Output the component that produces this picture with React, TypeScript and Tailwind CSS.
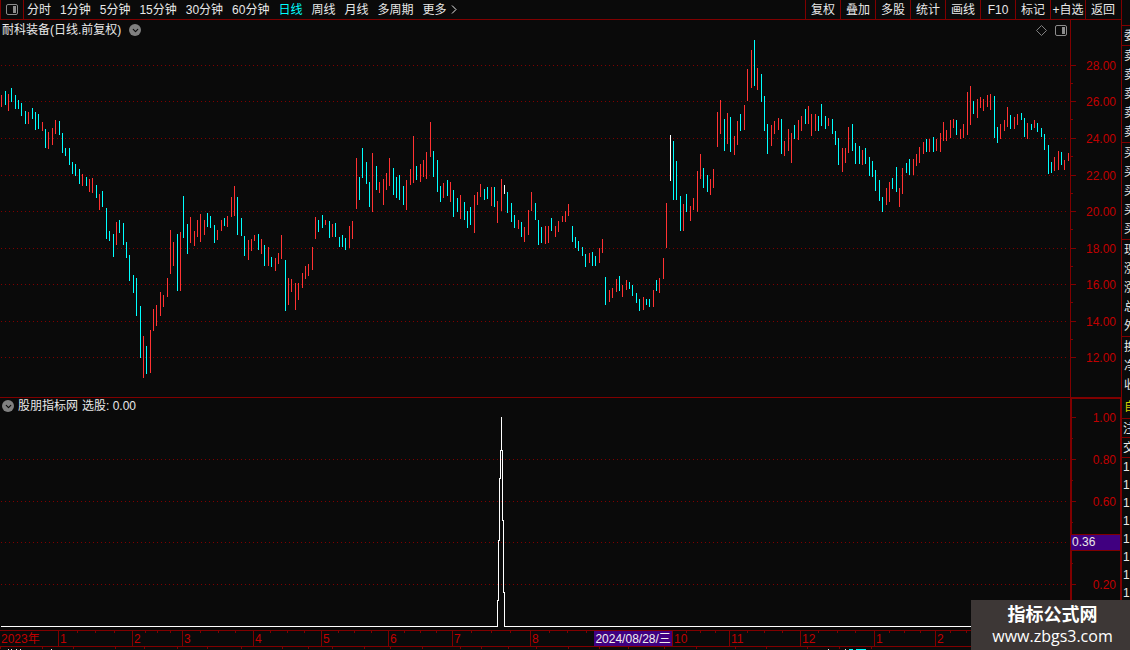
import { ChevronDown } from "lucide-react";

const periods = ["分时", "1分钟", "5分钟", "15分钟", "30分钟", "60分钟", "日线", "周线", "月线", "多周期"];
const tools = ["复权", "叠加", "多股", "统计", "画线", "F10", "标记", "+自选", "返回"];

// one entry per trading day: colour, x, high, low
const days = `
r1,95,107 c5,91,105 r8,94,111 c11,88,102 c15,95,109 c18,100,109 c21,103,116 c25,111,124 r28,112,124 c32,108,119
c35,112,130 c38,114,129 r42,122,131 c45,129,148 r48,132,149 r52,128,145 r55,120,134 c59,121,135 c62,133,153 c65,148,156
c69,148,165 c72,162,174 c75,164,176 c79,169,184 r82,174,186 c86,177,186 r89,179,192 r92,178,193 c96,185,198 r99,194,210
c102,191,207 c106,208,239 c109,231,241 c113,234,257 r116,222,245 c119,220,233 c123,223,245 c126,242,258 c129,255,281 c133,275,293
c136,278,316 c140,306,358 r143,336,378 c146,346,374 r150,330,373 r153,309,331 r156,305,326 r160,292,316 r163,295,307 r167,278,297
r170,230,274 r173,242,266 c177,234,291 r180,232,291 c183,196,238 c187,224,254 r190,217,243 r194,231,246 r197,220,237 r200,214,242
r204,220,235 c207,213,227 c210,216,228 c214,225,243 r217,230,240 r221,220,231 c224,218,226 r227,216,227 r231,197,217 r234,186,216
c237,197,235 c241,218,236 c244,236,256 r248,240,260 r251,239,251 r254,235,241 c258,234,250 r261,239,254 c264,245,266 r268,247,266
c271,257,267 r275,258,271 r278,253,264 r281,235,259 c285,260,311 r288,278,305 r291,279,292 r295,283,310 r298,283,300 r302,273,288
r305,266,279 r308,264,276 r312,247,270 r315,217,239 c318,220,232 c322,215,228 r325,220,225 c329,221,238 r332,224,237 c335,223,237
c339,237,247 c342,235,247 c345,238,250 r349,226,248 r352,221,239 r356,158,209 c359,177,200 c362,148,178 c366,162,184 c369,182,207
r372,153,212 c376,166,190 r379,182,193 r383,179,205 r386,173,190 r389,158,186 c393,168,195 c396,177,198 c399,175,200 c403,186,205
r406,180,210 r410,169,185 r413,136,183 c416,166,180 r420,164,182 r423,160,177 r426,152,179 r430,122,157 c433,151,177 c437,160,192
c440,186,202 r443,183,198 c447,180,196 r450,182,202 c453,190,217 c457,198,212 r460,195,219 c464,202,220 c467,211,228 c470,207,225
r474,195,233 r477,192,205 r480,184,197 c484,189,200 c487,187,199 r491,187,206 c494,187,207 r497,201,223 r501,179,211 w504,185,194
c507,192,213 c511,203,222 c514,215,228 r518,220,229 c521,222,237 r524,227,242 r528,210,235 r531,192,211 c535,203,220 c538,220,245
c541,227,243 r545,226,244 r548,226,243 c551,218,231 r555,226,237 r558,221,232 r562,216,222 r565,211,222 r568,204,216 c572,226,242
c575,237,248 c578,241,251 c582,247,256 c585,254,267 r589,253,263 c592,252,266 c595,256,266 r599,248,263 r602,239,253 c605,277,305
r609,290,302 r612,288,298 r616,279,292 c619,276,291 r622,285,297 r626,280,290 c629,282,289 c632,285,296 c636,293,303 c639,299,311
r643,297,310 c646,299,305 c649,299,307 r653,290,307 c656,280,291 r659,278,293 r663,258,279 r666,203,248 w670,135,181 c673,141,200
c676,161,200 c680,196,231 r683,204,231 c686,194,212 r690,206,221 r693,198,210 r697,171,212 r700,154,179 c703,168,188 c707,175,192
r710,179,195 r713,169,188 r717,112,147 r720,100,134 c724,119,151 r727,113,144 c730,117,152 r734,136,155 r737,121,145 c740,114,131
r744,105,130 r747,69,101 r751,50,88 c754,40,86 r757,68,90 c761,74,102 c764,96,131 c767,124,154 r771,125,146 r774,121,134
r778,118,130 c781,119,154 r784,141,156 r788,129,151 r791,133,163 c794,125,139 r798,120,140 r801,116,131 c805,109,124 r808,106,124
r811,114,136 r815,114,131 c818,116,131 c821,104,126 c825,116,129 r828,118,126 c832,119,134 c835,131,145 c838,138,165 r842,148,172
r845,148,163 r848,127,153 c852,124,151 c855,143,164 c859,146,164 r862,150,165 c865,148,164 c869,157,176 c872,161,177 c875,170,191
c879,180,201 c882,197,212 r886,188,205 r889,182,202 c892,178,189 c896,167,192 r899,188,207 r902,168,194 c906,163,173 c909,159,175
r913,159,175 r916,154,166 r919,147,163 r923,142,154 c926,139,152 r929,139,152 c933,137,152 r936,139,151 r940,133,152 r943,122,141
r946,130,141 r950,120,138 r953,119,128 c956,120,135 r960,129,139 r963,124,138 r967,92,135 r970,86,125 c973,101,114 r977,99,118
r980,97,108 r983,99,111 r987,95,107 r990,94,110 c994,96,138 c997,127,143 r1000,124,139 r1004,120,131 r1007,107,127 c1010,115,129
r1014,117,129 r1017,114,125 c1021,113,120 c1024,118,137 r1027,123,139 c1031,124,130 r1034,120,128 c1037,123,132 c1041,128,137 c1044,134,150
c1048,145,174 c1051,162,173 r1054,157,171 r1058,151,170 c1061,152,165 r1064,160,170 r1068,153,161
`
  .trim()
  .split(/\s+/)
  .map((day) => {
    const [x, high, low] = day.slice(1).split(",").map(Number);
    return { tone: day[0], x, high, low };
  });

const tones: Record<string, string> = { r: "#ff3232", c: "#00ffff", w: "#ffffff" };

const prices = [
  { label: "28.00", y: 65 },
  { label: "26.00", y: 101 },
  { label: "24.00", y: 138 },
  { label: "22.00", y: 175 },
  { label: "20.00", y: 211 },
  { label: "18.00", y: 248 },
  { label: "16.00", y: 284 },
  { label: "14.00", y: 321 },
  { label: "12.00", y: 357 },
];

const levels = [
  { label: "1.00", y: 417 },
  { label: "0.80", y: 459 },
  { label: "0.60", y: 501 },
  { label: "", y: 542 },
  { label: "0.20", y: 584 },
];

const months = [
  { label: "2023年", days: 58 },
  { label: "1", days: 74 },
  { label: "2", days: 50 },
  { label: "3", days: 71 },
  { label: "4", days: 68 },
  { label: "5", days: 67 },
  { label: "6", days: 64 },
  { label: "7", days: 78 },
  { label: "8", days: 75 },
  { label: "", days: 67 },
  { label: "10", days: 57 },
  { label: "11", days: 71 },
  { label: "12", days: 74 },
  { label: "1", days: 61 },
  { label: "2", days: 62 },
  { label: "", days: 124 },
];

const footerTicks = [
  0, 42, 73, 115, 144, 177, 207, 241, 282, 308, 332, 364, 390, 422, 460, 481, 508, 536, 568, 599, 628, 664, 696, 735, 766, 807, 839, 871,
];

const quoteGroups = [["卖", "卖", "卖", "卖", "卖"], ["买", "买", "买", "买", "买"], ["现", "涨", "涨", "总", "外"], ["换", "净", "收"]];

function PanelIcon() {
  return (
    <svg width="12" height="11" viewBox="0 0 12 11" aria-hidden="true">
      <rect x="0.5" y="0.5" width="11" height="10" rx="1.5" fill="none" stroke="#8c8c8c" />
      <rect x="7" y="2" width="3" height="7" fill="#8c8c8c" />
    </svg>
  );
}

function PaneMenu({ label }: { label: string }) {
  return (
    <button aria-label={label} className="flex h-3 w-3 shrink-0 items-center justify-center rounded-full bg-[#808080] text-[#0a0a0a]">
      <ChevronDown size={9} strokeWidth={3} />
    </button>
  );
}

function GridLine({ y }: { y: number }) {
  return <line x1="1" x2="1067" y1={y + 0.5} y2={y + 0.5} stroke="#800000" strokeDasharray="1 3" />;
}

function TopBar() {
  return (
    <header className="flex h-5 border-b border-[#800000]">
      <button aria-label="侧栏" className="flex w-6 shrink-0 items-center justify-center border-x border-[#800000]">
        <PanelIcon />
      </button>
      <nav className="flex flex-1 items-center gap-[9px] overflow-hidden pl-[3px] whitespace-nowrap">
        {periods.map((period) => (
          <button key={period} className={period === "日线" ? "text-[#00ffff]" : ""}>
            {period}
          </button>
        ))}
        <button className="flex items-center gap-1">
          更多
          <svg width="6" height="9" viewBox="0 0 6 9" fill="none" stroke="currentColor" aria-hidden="true">
            <path d="M1 0.5 5 4.5 1 8.5" />
          </svg>
        </button>
      </nav>
      <div className="flex pr-px">
        {tools.map((tool) => (
          <button key={tool} className="w-[35px] border-l border-[#800000] text-center whitespace-nowrap">
            {tool}
          </button>
        ))}
      </div>
    </header>
  );
}

function PricePane() {
  return (
    <section className="flex">
      <div className="min-w-0 flex-1">
        <div className="flex h-5 items-center gap-2 pr-[3px] pl-0.5">
          <h1>耐科装备(日线.前复权)</h1>
          <PaneMenu label="主图菜单" />
          <svg className="ml-auto" width="11" height="11" viewBox="0 0 11 11" fill="none" stroke="#808080" aria-hidden="true">
            <path d="M5.5 0.5 10.5 5.5 5.5 10.5 0.5 5.5Z" />
          </svg>
          <PanelIcon />
        </div>
        <svg className="block h-[357px] w-full" viewBox="0 40 1070 357" preserveAspectRatio="none" shapeRendering="crispEdges">
          {prices.map((price) => (
            <GridLine key={price.label} y={price.y} />
          ))}
          {days.map((day) => (
            <rect key={day.x} x={day.x} y={day.high} width="1" height={day.low - day.high} fill={tones[day.tone]} />
          ))}
        </svg>
      </div>
      <svg className="block shrink-0" width="51" height="377" viewBox="0 20 51 377" fill="#800000" shapeRendering="crispEdges">
        <rect x="0" y="20" width="1" height="377" />
        {prices.map((price, i) => (
          <g key={price.label}>
            <rect x="1" y={price.y} width="5" height="1" />
            {i < prices.length - 1 && <rect x="1" y={price.y + 18} width="2" height="1" />}
            <text x="46" y={price.y + 5} textAnchor="end" fill="#c00000">
              {price.label}
            </text>
          </g>
        ))}
      </svg>
    </section>
  );
}

function SignalPane() {
  return (
    <section className="flex border-t border-[#800000]">
      <div className="min-w-0 flex-1">
        <div className="flex h-4 items-center gap-1 pl-0.5">
          <PaneMenu label="副图菜单" />
          <h2>股朋指标网</h2>
          <span>选股: 0.00</span>
        </div>
        <svg className="block h-[216px] w-full" viewBox="0 414 1070 216" preserveAspectRatio="none" shapeRendering="crispEdges">
          {levels.slice(1).map((level) => (
            <GridLine key={level.y} y={level.y} />
          ))}
          <path
            d="M1 626.5H497.5V600.5H498.5V540.5H499.5V478.5H500.5V450.5H501.5V417V450.5H502.5V520.5H503.5V592.5H504.5V626.5H1070"
            fill="none"
            stroke="#ffffff"
          />
        </svg>
      </div>
      <svg className="block shrink-0" width="51" height="232" viewBox="0 398 51 232" fill="#800000" shapeRendering="crispEdges">
        <path d="M0 398H51V630H50V399H2V630H0Z" />
        {levels.map((level, i) => (
          <g key={level.y}>
            <rect x="2" y={level.y} width="4" height="1" />
            {i < levels.length - 1 && <rect x="2" y={level.y + 21} width="1" height="1" />}
            <text x="46" y={level.y + 5} textAnchor="end" fill="#c00000">
              {level.label}
            </text>
          </g>
        ))}
        <rect x="1" y="534" width="50" height="17" />
        <rect x="1" y="535" width="49" height="15" fill="#400080" />
        <text x="2" y="546" fill="#e8e8e8">
          0.36
        </text>
      </svg>
    </section>
  );
}

function Timeline() {
  return (
    <div className="relative flex h-4 overflow-hidden border-t border-[#800000] text-[#c00000]">
      {months.map((month, i) => (
        <div
          key={i}
          className={i > 0 ? "relative border-l border-[#800000] pl-px leading-4" : "pl-px leading-4"}
          style={{ width: `${(month.days / 1121) * 100}%` }}
        >
          {month.label}
          {i > 0 && (
            <div className="absolute inset-x-0 top-0 flex justify-evenly">
              <i className="h-0.5 w-px bg-[#800000]" />
              <i className="h-0.5 w-px bg-[#800000]" />
              <i className="h-0.5 w-px bg-[#800000]" />
            </div>
          )}
        </div>
      ))}
      <time className="absolute top-0 left-[53%] h-full w-[78px] bg-[#400080] text-center leading-4 whitespace-nowrap text-[#f0f0f0]">
        2024/08/28/三
      </time>
    </div>
  );
}

function QuoteStrip() {
  return (
    <aside className="w-[9px] shrink-0 overflow-hidden border-l border-[#800000] pt-[25px]">
      <div className="h-5 border-t border-[#800000] pl-0.5 leading-5">委</div>
      {quoteGroups.map((group, i) => (
        <div key={i} className="border-t border-[#800000] pb-px pl-0.5">
          {group.map((name, j) => (
            <div key={j} className="h-[19px] leading-5">
              {name}
            </div>
          ))}
        </div>
      ))}
      <div className="h-[23px] pl-0.5 leading-6 text-[#d0d000]">自</div>
      <div className="h-[19px] border-t border-[#800000] pl-px leading-5">注</div>
      <div className="h-5 border-t border-[#800000] pl-px leading-5">交</div>
      <div className="border-t border-[#800000] pl-px">
        {[0, 1, 2, 3, 4, 5, 6, 7].map((row) => (
          <div key={row} className="h-[18px] leading-[18px]">
            1
          </div>
        ))}
      </div>
    </aside>
  );
}

export default function App() {
  return (
    <div className="relative flex min-h-screen overflow-hidden bg-[#0a0a0a] font-['Liberation_Sans','Noto_Sans_CJK_SC',sans-serif] text-xs text-[#e8e8e8]">
      <main className="min-w-0 flex-1">
        <TopBar />
        <PricePane />
        <SignalPane />
        <Timeline />
        <svg className="block h-1 w-full" viewBox="0 0 1121 4" preserveAspectRatio="none" fill="#800000" shapeRendering="crispEdges">
          <rect width="1121" height="1" />
          {footerTicks.map((x) => (
            <rect key={x} x={x} y="1" width="1" height="2" />
          ))}
          <path d="M8 3h1v1h-1zM11 3h1v1h-1zM16 3h1v1h-1zM20 3h1v1h-1zM51 3h1v1h-1zM828 3h1v1h-1zM845 3h1v1h-1z" fill="#e8e8e8" />
          <path d="M849 3h4v1h-4zM856 3h10v1h-10z" fill="#00ffff" />
        </svg>
      </main>
      <QuoteStrip />
      <div className="absolute right-0 bottom-0 flex h-[50px] w-[159px] flex-col items-center justify-center gap-px bg-[#3d3736] pl-1 text-white">
        <strong className="text-lg leading-5">指标公式网</strong>
        <a href="#" className="font-['Open_Sans',sans-serif] text-base leading-5">
          www.zbgs3.com
        </a>
      </div>
    </div>
  );
}
